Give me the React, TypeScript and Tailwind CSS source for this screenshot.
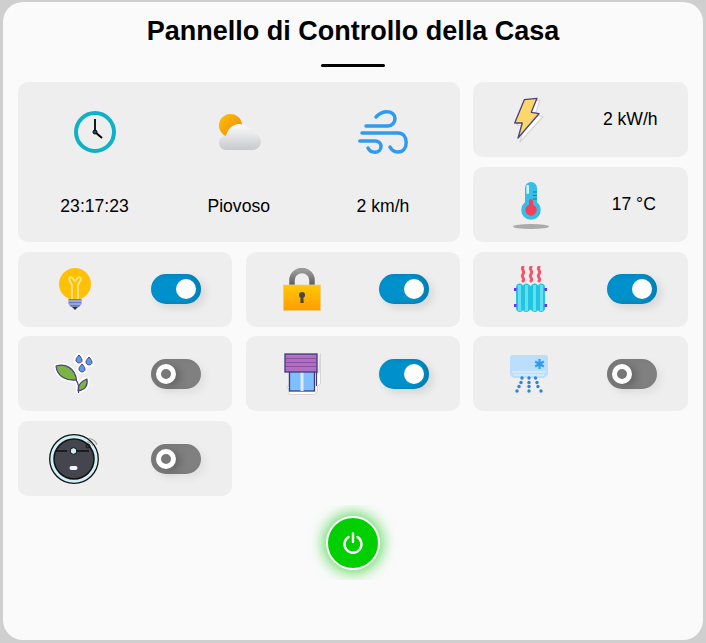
import React from "react";

const Clock = () => (
  <svg width="42" height="42" viewBox="0 0 42 42">
    <circle cx="21" cy="21" r="19" fill="none" stroke="#0fb1c9" strokeWidth="4" />
    <path d="M21 8v13" stroke="#000" strokeWidth="1.800" />
    <path d="M21 21l7 6" stroke="#000" strokeWidth="2" />
    <circle cx="21" cy="21" r="2" fill="#0a5a6a" stroke="#000" strokeWidth="1" />
  </svg>
);

const Weather = () => (
  <svg width="42" height="36" viewBox="0 0 42 36">
    <defs>
      <linearGradient id="sun" x1="0" y1="0" x2="1" y2="1">
        <stop offset="0" stopColor="#fdc10c" />
        <stop offset="1" stopColor="#ee8507" />
      </linearGradient>
      <linearGradient id="cloud" x1="0" y1="0" x2="0" y2="1">
        <stop offset="0" stopColor="#fbfbfb" />
        <stop offset="1" stopColor="#c6cacd" />
      </linearGradient>
    </defs>
    <circle cx="11.500" cy="11.500" r="11.500" fill="url(#sun)" />
    <path d="M7 36a7 7 0 0 1-7-7c0-4 3-7 7-7.300C8.500 15.500 13.500 10 20 10c6 0 10.500 3.500 12.500 8.500C38 19 42 23 42 27.500 42 32.500 38 36 33 36z" fill="url(#cloud)" />
  </svg>
);

const Wind = () => (
  <svg width="50" height="44" viewBox="0 0 50 44" fill="none" stroke="#2f9bf0" strokeWidth="3.500" strokeLinecap="round">
    <path d="M8 16h22c4 0 7-3.500 7-7.500S33.500 1.800 29 1.800c-4.500 0-8 2-11 5.200" />
    <path d="M4 23h36c5 0 8.200 4 8.200 9.500S45 42 40 42c-3.500 0-6.500-2-8-5" />
    <path d="M1.800 31H17c3.500 0 6 2.500 6 5.500S20.500 42.200 17 42.200c-3 0-5.500-1.200-7-4.200" />
  </svg>
);

const Bolt = () => (
  <svg width="30" height="46" viewBox="0 0 30 46">
    <path d="M13 4.500L26 3 21 18l8 1.500L6 45 10.500 29 3 28z" fill="#fff" stroke="#d6d6d6" strokeWidth="1.200" strokeLinejoin="round" />
    <path d="M10.300 2.700L23 1.300 17.300 15.300 25 16.700 4 41 8.300 26 .7 26z" fill="#fbd769" stroke="#4b3f8a" strokeWidth="1.300" strokeLinejoin="round" />
  </svg>
);

const Thermo = () => (
  <svg width="36" height="47" viewBox="0 0 36 47">
    <ellipse cx="18" cy="44.500" rx="18" ry="2.500" fill="#aaa" />
    <rect x="12" y="0" width="12" height="30" rx="6" fill="#36bfe6" />
    <circle cx="18" cy="28" r="9.800" fill="#36bfe6" />
    <rect x="13.500" y="3" width="2.500" height="9" rx="1.200" fill="#d9f5ff" />
    <path d="M20 10h4M20 13.500h4M20 17h4" stroke="#0e7f9f" strokeWidth="1.200" />
    <rect x="16" y="17" width="4" height="12" rx="2" fill="#f5405a" />
    <circle cx="18" cy="28" r="5.700" fill="#f5405a" />
  </svg>
);

const Bulb = () => (
  <svg width="32" height="42" viewBox="0 0 32 42">
    <circle cx="16" cy="16" r="16" fill="#ffc107" />
    <path d="M13 31V17l-3-5.500c0-2.500 3.500-3 4-.5l2 2 2-2c.5-2.500 4-2 4 .5L19 17v14" fill="none" stroke="#ffe680" strokeWidth="1.800" strokeLinejoin="round" />
    <path d="M9.500 31h13v5l-2.500 3h-8l-2.500-3z" fill="#6f7cc0" />
    <path d="M9.500 33h13M10 36h12" stroke="#c3cbee" strokeWidth="1.200" />
    <path d="M13 39h6l-3 3z" fill="#333" />
  </svg>
);

const Lock = () => (
  <svg width="38" height="43" viewBox="0 0 38 43">
    <defs>
      <linearGradient id="lockb" x1="0" y1="0" x2="0" y2="1">
        <stop offset="0" stopColor="#ffc800" />
        <stop offset="1" stopColor="#ff9c00" />
      </linearGradient>
      <linearGradient id="locks" x1="0" y1="0" x2="0" y2="1">
        <stop offset="0" stopColor="#9a9a9a" />
        <stop offset="1" stopColor="#555" />
      </linearGradient>
    </defs>
    <path d="M9 19V12a10 9.500 0 0 1 20 0v7" fill="none" stroke="url(#locks)" strokeWidth="5.500" />
    <rect x="0.500" y="17" width="37" height="25.500" fill="url(#lockb)" stroke="#eacb86" strokeWidth="0.800" />
    <circle cx="19" cy="27" r="3" fill="#4a4640" />
    <path d="M17.700 28h2.600l.4 7h-3.400z" fill="#4a4640" />
  </svg>
);

const Radiator = () => (
  <svg width="33" height="47" viewBox="0 0 33 47">
    <path d="M9 1c-2.500 2.500 2.500 3.500 0 7s2.500 4 0 7M17 1c-2.500 2.500 2.500 3.500 0 7s2.500 4 0 7M25 1c-2.500 2.500 2.500 3.500 0 7s2.500 4 0 7" fill="none" stroke="#f9536c" strokeWidth="3" strokeLinecap="round" />
    <path d="M2 21c0-2 2-3.500 3.500-3.500S8 18 9 19.500c1-1.500 2.500-2 3.500-2S15 18.500 16.500 20c1.500-1.500 2.500-2.500 4-2.500s2.500.5 3.500 2c1-1.500 2.500-2 3.500-2 1.500 0 3.500 1.500 3.500 3.500v21.500c0 2-2 3.500-3.500 3.500s-2.500-.5-3.500-2c-1 1.500-2 2-3.500 2s-2.500-1-4-2.500C15 45 14 46 12.500 46S10 45.500 9 44c-1 1.500-2 2-3.500 2S2 44.500 2 42.500z" fill="#22c4e0" />
    <path d="M5.500 19v26M12.500 19v26M20.500 19v26M27.500 19v26" stroke="#63dff2" strokeWidth="3" />
    <rect x="0" y="22" width="2.500" height="3" fill="#6a2ff5" />
    <rect x="30.500" y="22" width="2.500" height="3" fill="#6a2ff5" />
    <rect x="0" y="38" width="2.500" height="3" fill="#6a2ff5" />
    <rect x="30.500" y="38" width="2.500" height="3" fill="#6a2ff5" />
  </svg>
);

const plantShapes = [
  "M2 12c9-3 19 2 20.500 14C13 27 3 23 2 12z",
  "M24 37c0-6 3-10 9-12 1 7-2 11-9 12z",
  "M25 1c2.500 3 3.500 4.500 2.800 6.500-1.300 2.300-5.800 1.700-5.800-1.500 0-2 1.500-3 3-5z",
  "M35 3c2.500 3 3.500 4.500 2.800 6.500-1.300 2.300-5.800 1.700-5.800-1.500 0-2 1.500-3 3-5z",
  "M28 10c2.500 3 3.500 4.500 2.800 6.500-1.300 2.300-5.800 1.700-5.800-1.500 0-2 1.500-3 3-5z",
];

const Plant = () => (
  <svg width="43" height="42" viewBox="-2 -1 43 42">
    {plantShapes.map((d) => (
      <path key={d} d={d} fill="#fff" stroke="#fff" strokeWidth="4.500" strokeLinejoin="round" />
    ))}
    <path d="M22 26c2.500 3 3 8 2.500 13" fill="none" stroke="#fff" strokeWidth="4.500" />
    <path d={plantShapes[0]} fill="#7cb342" stroke="#4b3f8a" strokeWidth="1.200" strokeLinejoin="round" />
    <path d={plantShapes[1]} fill="#7cb342" stroke="#4b3f8a" strokeWidth="1.200" strokeLinejoin="round" />
    <path d={plantShapes[2]} fill="#5a9be6" stroke="#4b3f8a" strokeWidth="1" />
    <path d={plantShapes[3]} fill="#5a9be6" stroke="#4b3f8a" strokeWidth="1" />
    <path d={plantShapes[4]} fill="#5a9be6" stroke="#4b3f8a" strokeWidth="1" />
    <path d="M22 26c2.500 3 3 8 2.500 13" fill="none" stroke="#4b3f8a" strokeWidth="1.200" />
  </svg>
);

const Shutter = () => (
  <svg width="38" height="42" viewBox="0 0 38 42">
    <path d="M36.500 0.500v30l-3 3v5l-3 3H5v-6H3v-2h2V20h30z" fill="#fff" stroke="#d5d5d5" strokeWidth="1" />
    <rect x="5.500" y="18" width="25" height="20" fill="#7fbfff" stroke="#3f3a80" strokeWidth="1.300" />
    <path d="M18 18v20" stroke="#dcecff" strokeWidth="3" />
    <path d="M32.500 18v15" stroke="#3f3a80" strokeWidth="1.200" />
    <rect x="1" y="1" width="32" height="18" fill="#b06fc0" stroke="#3f3a80" strokeWidth="1.300" />
    <path d="M2 5.500h30M2 9.500h30M2 13.500h30" stroke="#8a4fa0" strokeWidth="1.200" />
  </svg>
);

const AC = () => (
  <svg width="38" height="38" viewBox="0 0 38 38">
    <path d="M3 0h32a3 3 0 0 1 3 3v15a5 5 0 0 1-5 5H5a5 5 0 0 1-5-5V3a3 3 0 0 1 3-3z" fill="#bbdefb" />
    <path d="M2 17h34M4 20h30" stroke="#e8f4fe" strokeWidth="1" />
    <path d="M29.500 4v10M25.200 6.500l8.600 5M25.200 11.500l8.600-5" stroke="#2f9bf0" strokeWidth="2.200" />
    <g fill="#2a86dc">
      <circle cx="12" cy="23" r="1.700" /><circle cx="19" cy="23" r="1.700" /><circle cx="25.500" cy="23" r="1.700" />
      <circle cx="11" cy="27.500" r="1.700" /><circle cx="19" cy="27.500" r="1.700" /><circle cx="27" cy="27.500" r="1.700" />
      <circle cx="9" cy="31.500" r="1.700" /><circle cx="19" cy="31.500" r="1.700" /><circle cx="28" cy="31.500" r="1.700" />
      <circle cx="7" cy="36" r="1.700" /><circle cx="19" cy="36" r="1.700" /><circle cx="31" cy="36" r="1.700" />
    </g>
  </svg>
);

const Robot = () => (
  <svg width="52" height="50" viewBox="0 0 52 50">
    <circle cx="25" cy="25" r="24.300" fill="#d0f0f7" stroke="#111" strokeWidth="1.300" />
    <circle cx="25" cy="25" r="20" fill="#45454f" stroke="#111" strokeWidth="1.500" />
    <path d="M7 17h11M24 17h16" stroke="#111" strokeWidth="1.300" />
    <circle cx="24.500" cy="17" r="3.300" fill="#d0f0f7" stroke="#111" strokeWidth="1" />
    <rect x="20.500" y="32" width="8" height="4" rx="2" fill="#f2f4ff" />
    <path d="M38 8a6 6 0 0 1 6 4M39 4.500a10 10 0 0 1 9 6" fill="none" stroke="#999" strokeWidth="1.200" />
    <circle cx="39" cy="12" r="2" fill="none" stroke="#111" strokeWidth="1" />
  </svg>
);

const Toggle = ({ on }: { on: boolean }) =>
  on ? (
    <div className="w-[50px] h-[30px] rounded-full bg-[#0091cd] flex items-center justify-end pr-[5px] shadow-[inset_-4px_0_6px_rgba(0,0,0,0.15),4px_4px_8px_rgba(0,0,0,0.1)]">
      <div className="w-5 h-5 rounded-full bg-white" />
    </div>
  ) : (
    <div className="w-[50px] h-[30px] rounded-full bg-[#808080] flex items-center justify-start pl-[5px] shadow-[inset_4px_0_6px_rgba(0,0,0,0.08),4px_4px_8px_rgba(0,0,0,0.06)]">
      <div className="w-5 h-5 rounded-full bg-[#777777] border-[5px] border-white shadow-[4px_2px_8px_rgba(0,0,0,0.25)]" />
    </div>
  );

const Tile = ({ icon, on }: { icon: React.ReactNode; on: boolean }) => (
  <div className="rounded-[10px] bg-[#eeeeee] grid grid-cols-2 items-center justify-items-center">
    <div className="flex items-center justify-center pl-[6px]">{icon}</div>
    <div className="flex justify-center pr-[5px]"><Toggle on={on} /></div>
  </div>
);

const TilePlain = ({ icon, on }: { icon: React.ReactNode; on: boolean }) => (
  <div className="rounded-[10px] bg-[#eeeeee] grid grid-cols-2 items-center justify-items-center">
    <div className="flex items-center justify-center pl-[4px]">{icon}</div>
    <div className="flex justify-center pr-[5px]"><Toggle on={on} /></div>
  </div>
);

const TileRight = ({ icon, on }: { icon: React.ReactNode; on: boolean }) => (
  <div className="rounded-[10px] bg-[#eeeeee] grid grid-cols-2 items-center justify-items-center">
    <div className="flex items-center justify-center pl-[8px]">{icon}</div>
    <div className="flex justify-center pr-[5px]"><Toggle on={on} /></div>
  </div>
);

export default function App() {
  return (
    <div className="w-[706px] h-[643px] bg-[#cfcfcf] pt-[2px] px-[3px] pb-[3px] font-['Liberation_Sans',Arial,sans-serif] text-black">
      <div className="h-[638px] rounded-[20px] bg-[#fafafa] px-[15px] flex flex-col">
        <h1 className="text-[27px] leading-[30px] font-bold text-center mt-[14px]">Pannello di Controllo della Casa</h1>
        <div className="w-16 h-[3px] rounded-full bg-black mx-auto mt-[18px] mb-[15px]" />
        <div className="grid grid-cols-[214px_214px_215px] gap-x-[13.500px] gap-y-[9.750px] auto-rows-[75px]">
          <div className="col-span-2 row-span-2 rounded-[10px] bg-[#eeeeee] grid grid-cols-3 px-[4.500px] text-[17.600px]">
            {[
              [<Clock />, "23:17:23"],
              [<div className="flex pl-[2px]"><Weather /></div>, "Piovoso"],
              [<Wind />, "2 km/h"],
            ].map(([icon, label], i) => (
              <div key={i} className="flex flex-col items-center">
                <div className="h-[44px] mt-[28px] flex items-center justify-center">{icon}</div>
                <div className="mt-[42px] leading-[20px]">{label}</div>
              </div>
            ))}
          </div>
          <div className="rounded-[10px] bg-[#eeeeee] grid grid-cols-2 items-center justify-items-center text-[17.600px]">
            <div className="flex pl-[4px]"><Bolt /></div>
            <div className="pr-[8px]">2 kW/h</div>
          </div>
          <div className="rounded-[10px] bg-[#eeeeee] grid grid-cols-2 items-center justify-items-center text-[17.600px]">
            <div className="flex pl-[8px] pt-[3px]"><Thermo /></div>
            <div className="pr-[1px]">17 °C</div>
          </div>
          <Tile icon={<Bulb />} on />
          <Tile icon={<Lock />} on />
          <TileRight icon={<Radiator />} on />
          <TilePlain icon={<Plant />} on={false} />
          <TileRight icon={<Shutter />} on />
          <TilePlain icon={<AC />} on={false} />
          <Tile icon={<Robot />} on={false} />
        </div>
        <div className="flex justify-center mt-[9px]">
          <div className="w-[110px] h-[75px] overflow-hidden flex items-center justify-center">
            <button className="w-[54px] h-[54px] rounded-full bg-[#00d000] border-2 border-white flex items-center justify-center shadow-[0_0_14px_3px_rgba(0,200,0,0.6)]">
              <svg width="22" height="22" viewBox="0 0 22 22" fill="none" stroke="#fff" strokeWidth="2.400" strokeLinecap="round">
                <path d="M11 1.500v8.500" />
                <path d="M6.500 5a8.500 8.500 0 1 0 9 0" />
              </svg>
            </button>
          </div>
        </div>
      </div>
    </div>
  );
}
